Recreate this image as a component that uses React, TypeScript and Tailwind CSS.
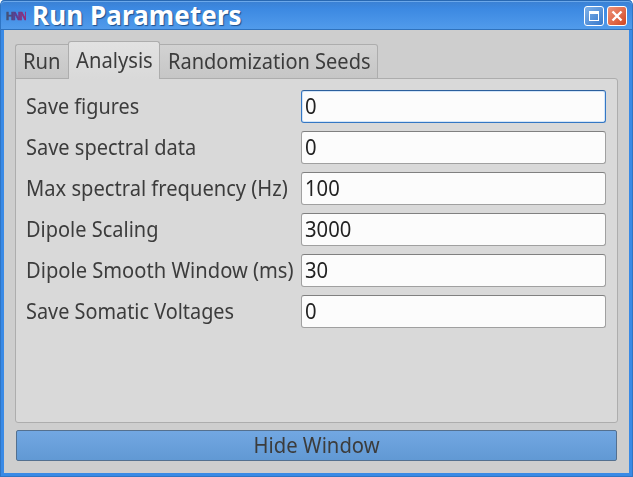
import { useState } from "react";

const fields = [
  { label: "Save figures", value: "0", fit: "scale-x-[0.9]" },
  { label: "Save spectral data", value: "0", fit: "scale-x-[0.909]" },
  { label: "Max spectral frequency (Hz)", value: "100", fit: "scale-x-[0.915]" },
  { label: "Dipole Scaling", value: "3000", fit: "scale-x-[0.908]" },
  { label: "Dipole Smooth Window (ms)", value: "30", fit: "scale-x-[0.915]" },
  { label: "Save Somatic Voltages", value: "0", fit: "scale-x-[0.903]" },
];

function TitleBar() {
  return (
    <header className="flex h-[30px] shrink-0 items-center rounded-t-[4px] border-b border-[#2f72bd] bg-linear-to-b from-[#3a7fd0] via-[#3c89e2] via-30% to-[#519beb] pb-px pl-[5px] pr-[5px] pt-[2px] shadow-[inset_0_1px_0_#2868b2,inset_0_2px_0_#6ba8ea]">
      <span className="mt-px w-[20px] shrink-0 bg-linear-to-r from-[#3f5474] via-[#5a378f] to-[#a01f70] bg-clip-text font-['Liberation_Sans',sans-serif] text-[11px] font-bold leading-[14px] tracking-[-1.2px] text-transparent [-webkit-text-stroke:0.6px_transparent]">
        HNN
      </span>
      <h1 className="ml-[6px] whitespace-nowrap text-[26px] font-bold leading-[28px] tracking-[0.1px] text-white [text-shadow:1px_1px_1px_#1d4f8c]">
        Run Parameters
      </h1>
      <div className="ml-auto flex gap-[3px] pt-px">
        <button className="flex size-[20px] items-center justify-center rounded-[3px] border border-white bg-linear-to-br from-[#7fb1e8] to-[#3578cb]">
          <span className="h-[10px] w-[10px] border border-t-[3px] border-white" />
        </button>
        <button className="flex size-[20px] items-center justify-center rounded-[3px] border border-white bg-linear-to-br from-[#ee9278] to-[#d2451d]">
          <svg className="size-[12px]" viewBox="0 0 12 12">
            <path d="M1.5 1.5l9 9M10.5 1.5l-9 9" stroke="white" strokeWidth="2.4" />
          </svg>
        </button>
      </div>
    </header>
  );
}

export default function App() {
  const [values, setValues] = useState(fields.map((f) => f.value));
  return (
    <div className="h-[477px] w-[633px] bg-white font-['Noto_Sans',sans-serif] text-[22px] text-[#3c3c3c]">
      <div className="flex h-full flex-col rounded-t-[5px] border-x border-b border-[#2f75c4] bg-[#398ae6]">
        <TitleBar />
        <main className="mx-[3px] mb-[3px] flex grow flex-col bg-[#cecece] px-[11px] pt-[11px]">
          <nav className="relative z-10 -mb-px flex h-[38px] items-end whitespace-nowrap leading-[30px]">
            <div className="h-[35px] w-[53px] rounded-tl-[3px] border border-r-0 border-[#adadad] bg-linear-to-b from-[#d2d2d2] to-[#c6c6c6] pl-[7px]">
              <span className="inline-block origin-left scale-x-[0.92]">Run</span>
            </div>
            <div className="h-[38px] w-[92px] rounded-t-[3px] border border-b-0 border-[#adadad] bg-linear-to-b from-[#e2e2e2] to-[#d9d9d9] pl-[7px] pt-[2px]">
              <span className="inline-block origin-left scale-x-[0.918]">Analysis</span>
            </div>
            <div className="h-[35px] w-[218px] rounded-tr-[3px] border border-l-0 border-[#adadad] bg-linear-to-b from-[#d2d2d2] to-[#c6c6c6] pl-[8px]">
              <span className="inline-block origin-left scale-x-[0.91]">Randomization Seeds</span>
            </div>
          </nav>
          <section className="flex h-[345px] flex-col gap-[8px] rounded-[3px] rounded-tl-none border border-[#adadad] bg-[#d9d9d9] pl-[10px] pr-[11px] pt-[11px]">
            {fields.map((f, i) => (
              <label key={f.label} className="flex h-[33px] items-center">
                <span className="w-[275px] shrink-0 whitespace-nowrap pb-[2px]">
                  <span className={`inline-block origin-left ${f.fit}`}>{f.label}</span>
                </span>
                <span
                  className={`flex h-[33px] w-[305px] overflow-hidden rounded-[3px] border bg-[#fcfcfc] px-[3px] pb-[2px] ${i === 0 ? "border-[#3477c4] border-t-[#2c5f9c] shadow-[inset_0_0_0_1px_#d3e5f8]" : "border-[#a0a0a0] border-t-[#808080]"}`}
                >
                  <input
                    value={values[i]}
                    onChange={(e) => setValues(values.map((v, j) => (j === i ? e.target.value : v)))}
                    className="w-full origin-left scale-x-[0.92] bg-transparent text-[#222] outline-none"
                  />
                </span>
              </label>
            ))}
          </section>
          <button className="mx-px mt-[7px] h-[31px] rounded-[2px] border border-[#54708f] bg-linear-to-b from-[#72a7e2] to-[#6199d4] pb-[2px] leading-[27px]">
            <span className="inline-block scale-x-[0.92]">Hide Window</span>
          </button>
        </main>
      </div>
    </div>
  );
}
